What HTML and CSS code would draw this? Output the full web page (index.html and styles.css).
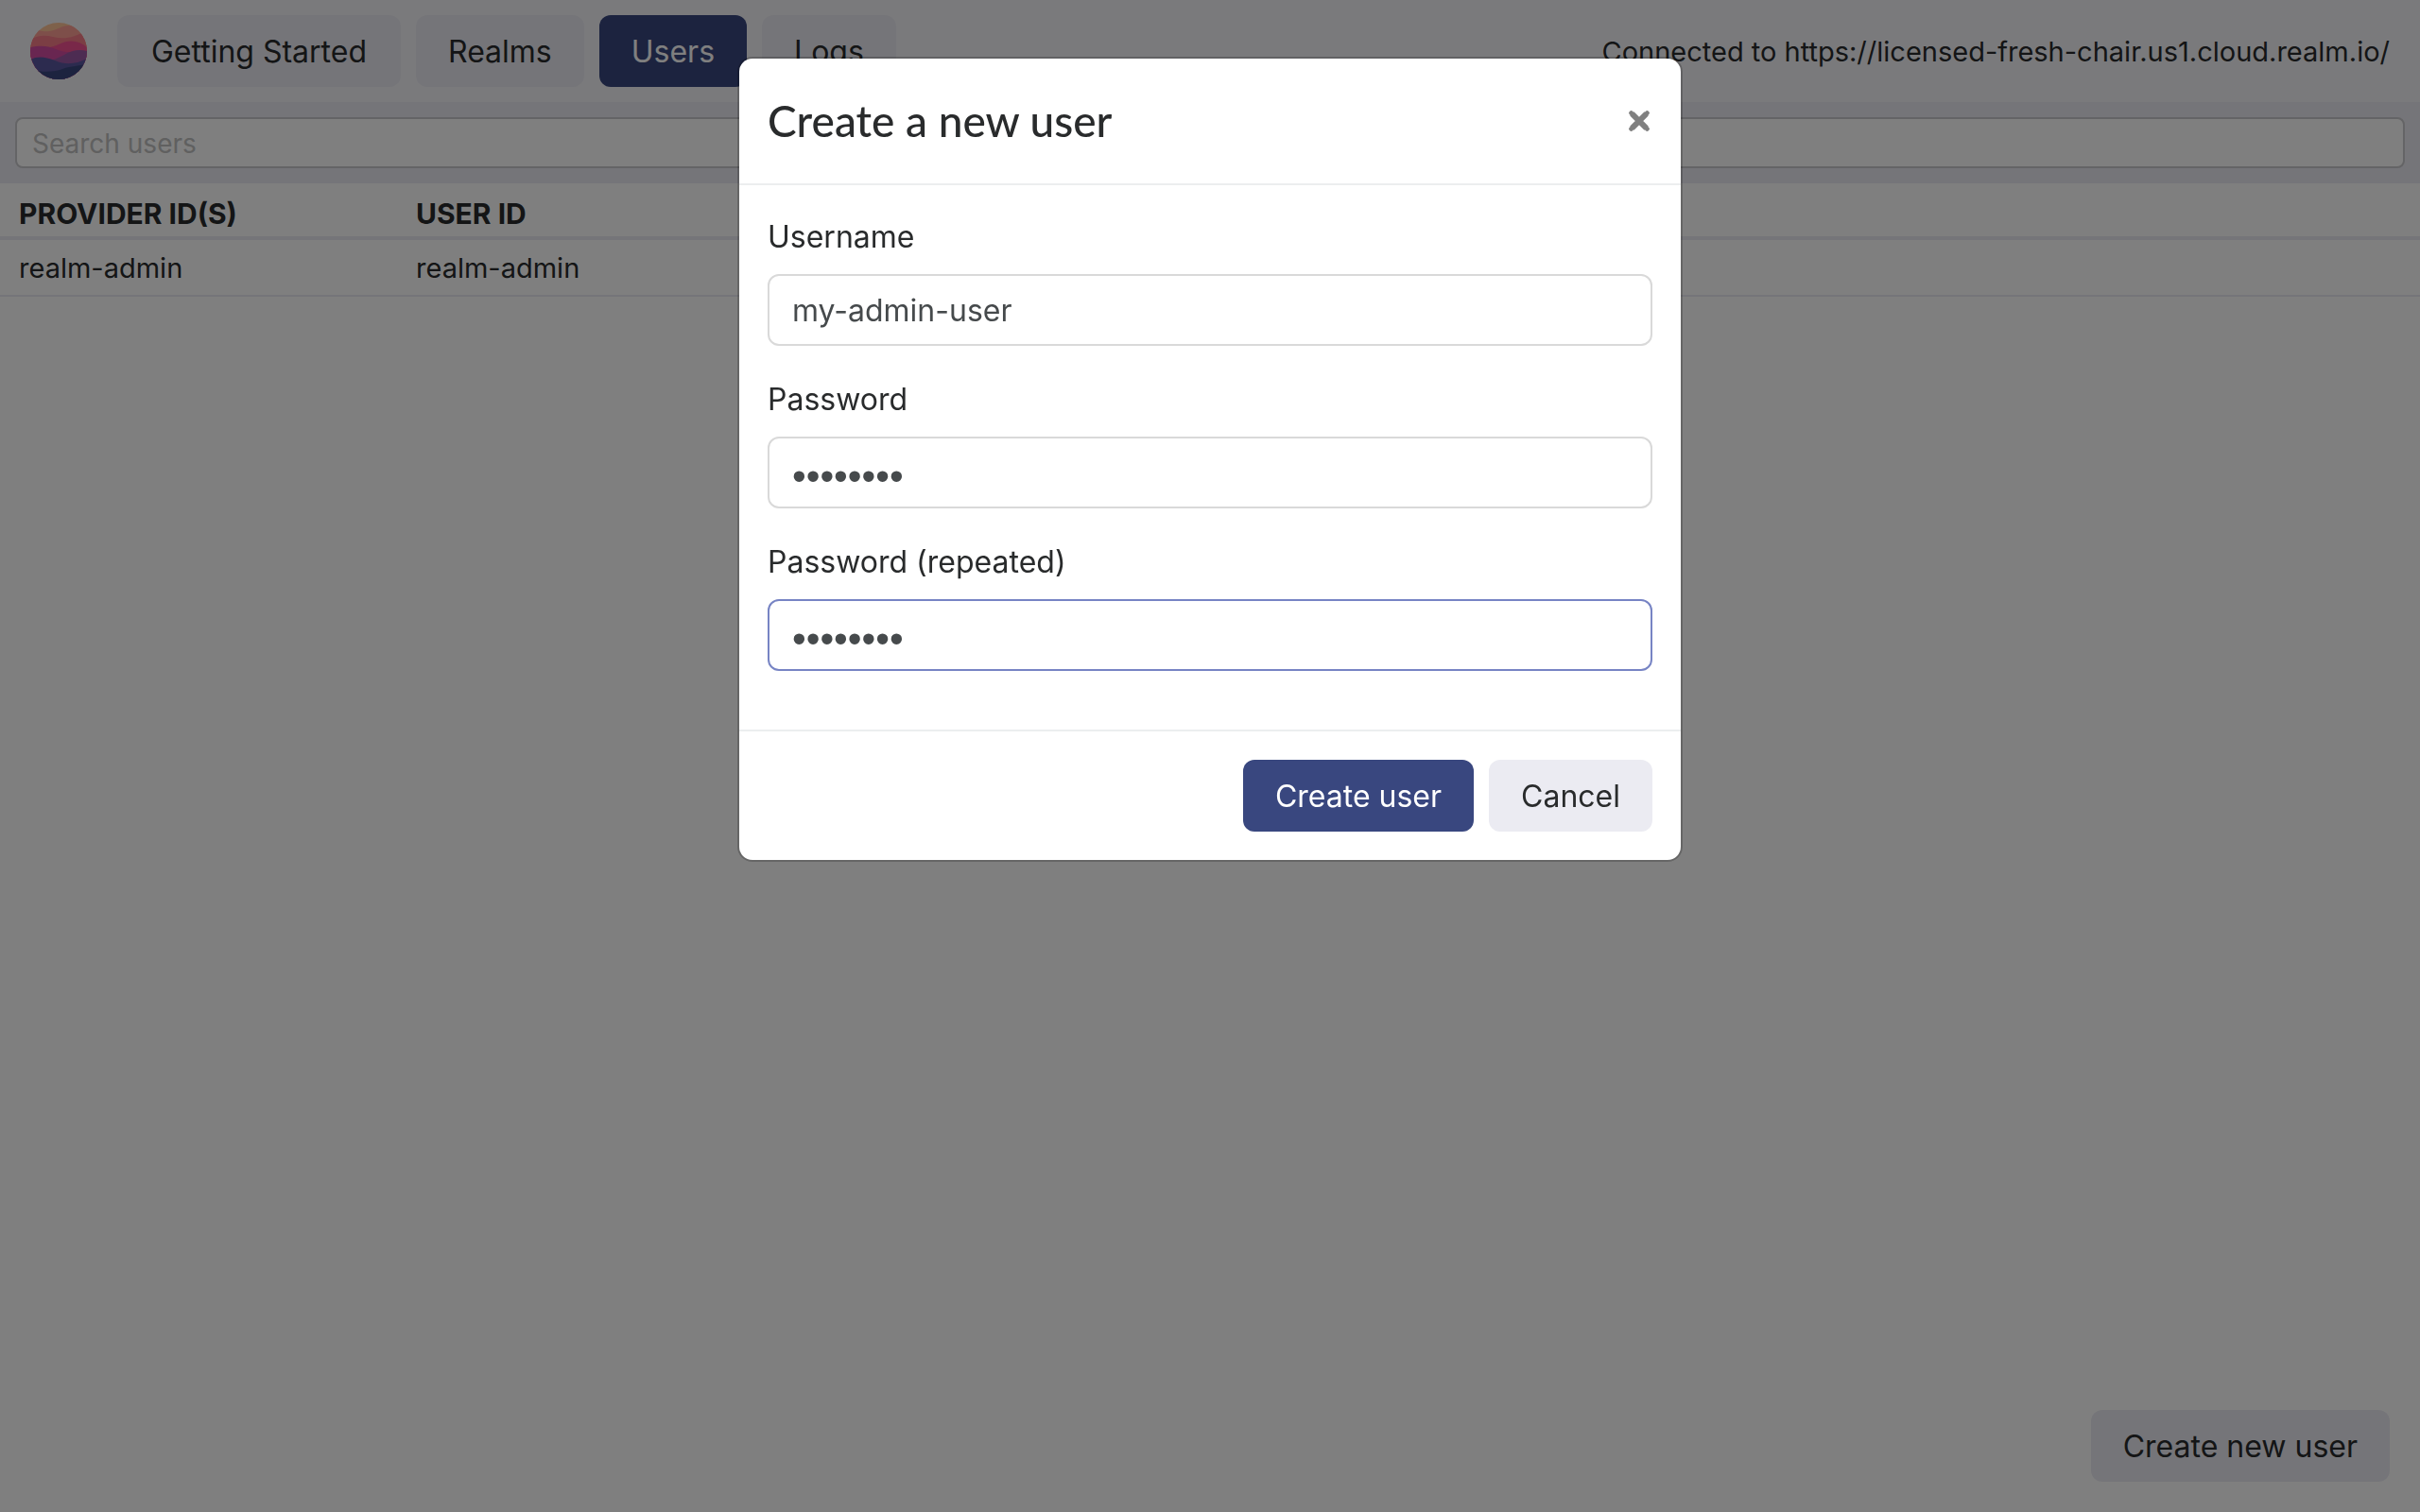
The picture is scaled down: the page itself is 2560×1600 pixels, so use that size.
FILE: index.html
```html
<!DOCTYPE html>
<html lang="en">
<head>
  <meta charset="utf-8">
  <meta name="viewport" content="width=device-width, initial-scale=1">
  <title>Realm Studio</title>
  <link rel="stylesheet" href="styles.css">
</head>
<body>
  <div class="app">
    <header class="topbar">
      <svg class="logo" viewBox="0 0 60 60" aria-hidden="true">
        <defs>
          <clipPath id="disc"><circle cx="30" cy="30" r="30"/></clipPath>
        </defs>
        <g clip-path="url(#disc)">
          <path fill="#fcc397" d="M0 0h60v60H0z"/>
          <path fill="#fc9f95" d="M0 6C10 8 14 10 20 9C28 8 32 3 42 3C50 3 54 5 60 8V60H0z"/>
          <path fill="#f77c88" d="M0 18C8 13 16 13 24 15C36 18 46 16 60 8V60H0z"/>
          <path fill="#f25192" d="M0 34C10 28 20 27 30 23C42 17 52 19 60 26V60H0z"/>
          <path fill="#d34ca3" d="M0 26C10 24 18 24 27 28C36 32 44 32 60 30V60H0z"/>
          <path fill="#9a59a5" d="M0 46C20 42 28 38 36 34C44 29 52 28 60 30V60H0z"/>
          <path fill="#59569e" d="M0 39C8 35 16 36 26 40C38 45 48 44 60 38V60H0z"/>
          <path fill="#39477f" d="M0 50C16 53 26 52 34 49C44 45 50 47 60 43V60H0z"/>
        </g>
      </svg>
      <nav class="tabs">
        <button class="btn btn-wide" type="button">Getting Started</button>
        <button class="btn" type="button">Realms</button>
        <button class="btn btn-primary" type="button">Users</button>
        <button class="btn" type="button">Logs</button>
      </nav>
      <p class="status">Connected to https://licensed-fresh-chair.us1.cloud.realm.io/</p>
    </header>

    <div class="searchbar">
      <input class="search" type="search" placeholder="Search users" aria-label="Search users">
    </div>

    <main class="content">
      <table class="users">
        <thead>
          <tr><th class="col-id" scope="col">PROVIDER ID(S)</th><th scope="col">USER ID</th></tr>
        </thead>
        <tbody>
          <tr><td>realm-admin</td><td>realm-admin</td></tr>
        </tbody>
      </table>
    </main>

    <footer class="actions">
      <button class="btn" type="button">Create new user</button>
    </footer>
  </div>

  <div class="backdrop">
    <form class="modal" role="dialog" aria-modal="true" aria-labelledby="modal-title">
      <div class="modal-header">
        <h1 class="modal-title" id="modal-title">Create a new user</h1>
        <button class="close" type="button" aria-label="Close">
          <svg class="close-icon" viewBox="0 0 22 22" aria-hidden="true">
            <path d="M3.4 3.4L18.6 18.6M18.6 3.4L3.4 18.6" stroke="currentColor" stroke-width="6"/>
            <path d="M2.6 2.6L19.4 19.4M19.4 2.6L2.6 19.4" stroke="currentColor" stroke-width="4.8" stroke-linecap="round"/>
          </svg>
        </button>
      </div>
      <div class="modal-body">
        <div class="field">
          <label for="username">Username</label>
          <input class="input" id="username" type="text" value="my-admin-user" autocomplete="off">
        </div>
        <div class="field">
          <label for="password">Password</label>
          <input class="input input-secret" id="password" type="password" value="password" autocomplete="off">
        </div>
        <div class="field">
          <label for="password-repeated">Password (repeated)</label>
          <input class="input input-secret input-active" id="password-repeated" type="password" value="password" autocomplete="off">
        </div>
      </div>
      <div class="modal-footer">
        <button class="btn btn-primary" type="submit">Create user</button>
        <button class="btn" type="button">Cancel</button>
      </div>
    </form>
  </div>
</body>
</html>
```
FILE: styles.css
```css
* {
  box-sizing: border-box;
}

body {
  margin: 0;
  background: #fff;
  color: #292b2c;
  font-family: Inter, "Liberation Sans", sans-serif;
  font-size: 32px;
  line-height: 48px;
}

button,
input {
  font: inherit;
  color: inherit;
}

.app {
  display: flex;
  flex-direction: column;
  min-height: 100vh;
}

.topbar {
  display: flex;
  align-items: center;
  padding: 16px 32px;
  background: #f5f5f9;
}

.logo {
  width: 60px;
  height: 60px;
  margin-right: 32px;
}

.tabs {
  display: flex;
  gap: 16px;
}

.status {
  margin: 0 0 0 auto;
  padding-top: 2px;
  font-size: 29px;
}

.btn {
  padding: 15px 34px 13px;
  border: 0;
  border-radius: 12px;
  background: #ebebf2;
  white-space: nowrap;
}

.btn-wide {
  min-width: 300px;
}

.btn-primary {
  background: #39477f;
  color: #fff;
}

.searchbar {
  padding: 16px;
  background: #ebebf2;
}

.search {
  display: block;
  width: 100%;
  height: 54px;
  padding: 2px 16px 0;
  border: 2px solid #c8c8cc;
  border-radius: 8px;
  background: #fff;
  font-size: 28px;
  appearance: none;
}

.search::placeholder {
  color: #c0c0c0;
}

.content {
  flex: 1;
}

.users {
  width: 100%;
  border-collapse: separate;
  border-spacing: 0;
  table-layout: fixed;
  font-size: 29px;
  line-height: 42px;
  text-align: left;
}

.col-id {
  width: 420px;
}

.users th {
  padding: 11px 20px 3px;
  border-bottom: 4px solid #ebebf2;
  font-size: 30px;
}

.users td {
  padding: 9px 20px 7px;
  border-bottom: 2px solid #ebebf2;
}

.actions {
  display: flex;
  justify-content: flex-end;
  padding: 32px;
}

.backdrop {
  position: fixed;
  inset: 0;
  display: flex;
  justify-content: center;
  align-items: flex-start;
  padding: 62px 16px;
  background: rgba(0, 0, 0, 0.5);
}

.modal {
  width: 100%;
  max-width: 996px;
  border-radius: 14px;
  background: #fff;
  box-shadow: 0 0 0 2px rgba(0, 0, 0, 0.2);
}

.modal-header {
  display: flex;
  justify-content: space-between;
  align-items: center;
  padding: 30px;
  border-bottom: 2px solid #eceeef;
}

.modal-title {
  margin: 0;
  font-family: Lato, sans-serif;
  font-size: 46px;
  font-weight: 500;
  line-height: 72px;
}

.close {
  display: flex;
  padding: 0 3px;
  border: 0;
  background: none;
  color: #808080;
}

.close-icon {
  width: 22px;
  height: 22px;
}

.modal-body {
  display: flex;
  flex-direction: column;
  gap: 32px;
  padding: 30px 30px 62px;
}

.field {
  display: flex;
  flex-direction: column;
  gap: 14px;
  line-height: 50px;
}

.input {
  width: 100%;
  height: 76px;
  padding: 0 24px;
  border: 2px solid #d9d9d9;
  border-radius: 12px;
  background: #fff;
  color: #464a4c;
}

.input-secret {
  padding-top: 8px;
  font-family: "Liberation Sans", sans-serif;
  font-size: 42px;
}

.input-active {
  border-color: #7784c4;
  outline: none;
}

.modal-footer {
  display: flex;
  justify-content: flex-end;
  gap: 16px;
  padding: 30px;
  border-top: 2px solid #eceeef;
}
```
